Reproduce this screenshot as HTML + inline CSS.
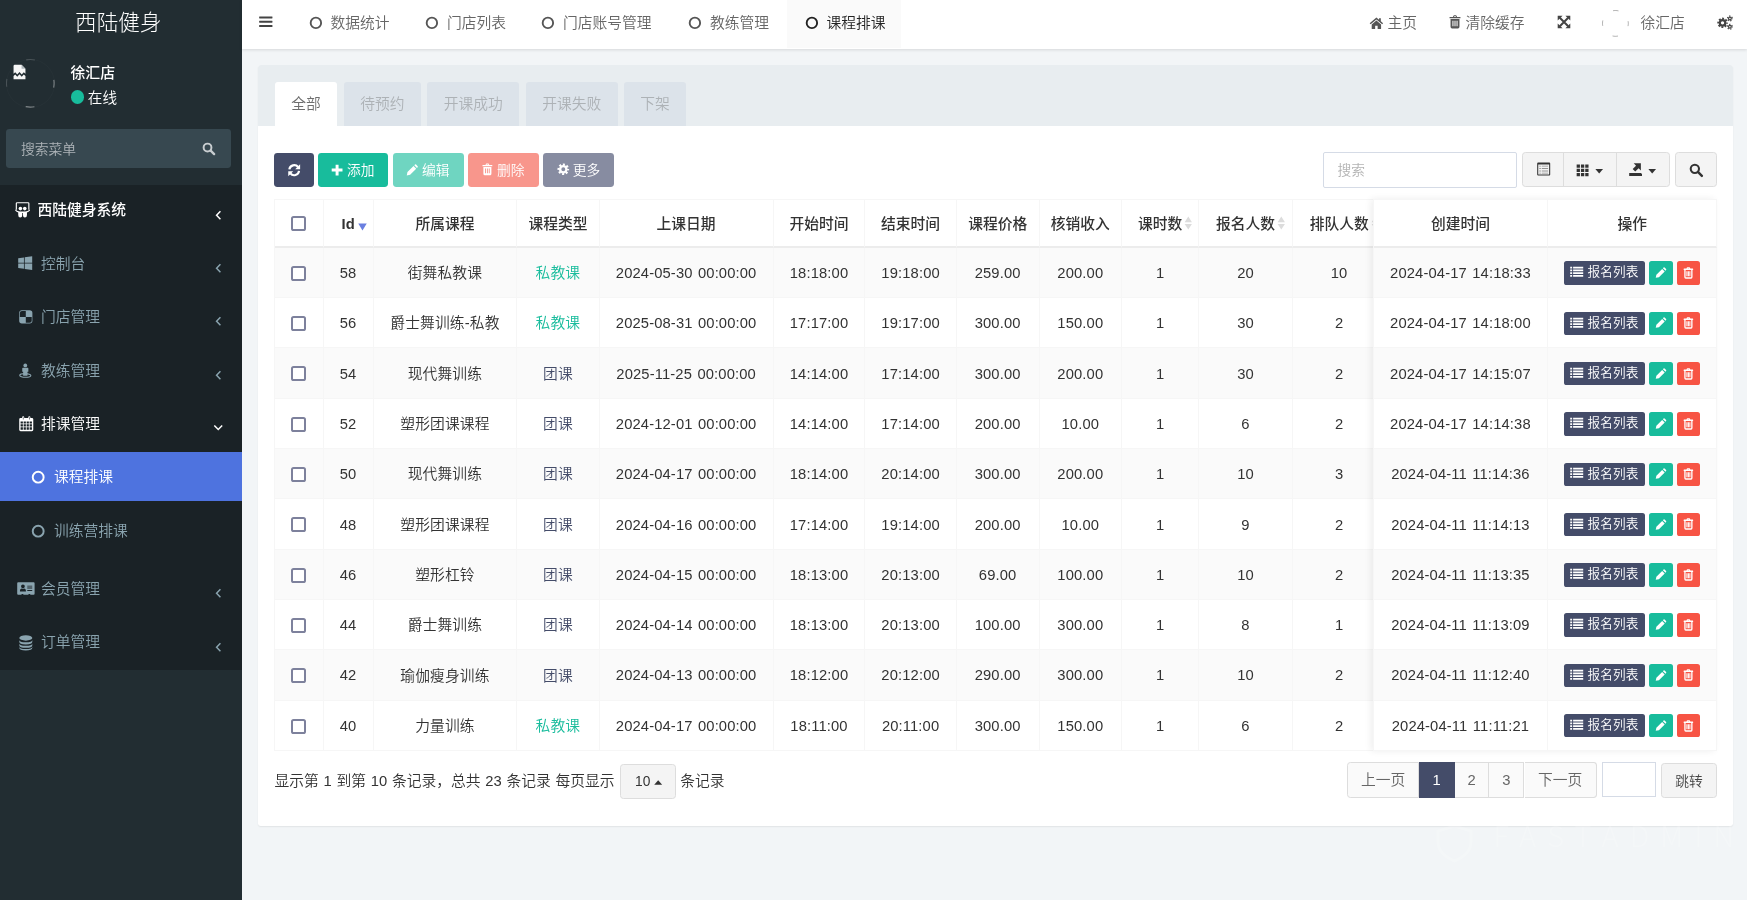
<!DOCTYPE html>
<html lang="zh-CN">
<head>
<meta charset="utf-8">
<title>西陆健身</title>
<style>
*{box-sizing:border-box;margin:0;padding:0}
html,body{width:1747px;height:900px;overflow:hidden}
body{font-family:"Liberation Sans","Noto Sans CJK SC",sans-serif;font-size:14.7px;font-weight:350;color:#333;background:#f2f5f7;position:relative;-webkit-font-smoothing:antialiased}
.sidebar,.hdr,.panel{will-change:transform}
svg{display:block;overflow:visible}
i{font-style:normal}
/* ---------- sidebar ---------- */
.sidebar{position:absolute;left:0;top:0;width:242px;height:900px;background:#222d32;color:#fff;overflow:hidden}
.logo{position:absolute;left:0;top:0;width:236.6px;height:48.6px;line-height:46.4px;text-align:center;font-size:21.6px;font-weight:300;color:#fff;letter-spacing:0}
.avatar{position:absolute;left:6.2px;top:59px;width:48.6px;height:48.6px;border-radius:50%;border:1px solid rgba(255,255,255,.02);overflow:visible}
.avatar .ring{position:absolute;left:-1px;top:-1px;width:48.6px;height:48.6px}
.avatar .brk{position:absolute;left:5.7px;top:4.2px;width:13px;height:16px}
.uname{position:absolute;left:70.4px;top:61.8px;height:22px;line-height:22px;font-size:14.9px;font-weight:500;color:#fff}
.ustat{position:absolute;left:70.6px;top:86.9px;height:22px;line-height:22px;font-size:14.6px;color:#fff;padding-left:17.2px}
.ustat .dot{position:absolute;left:0;top:3.6px;width:13.2px;height:13.2px;border-radius:50%;background:#18bc9c}
.sform{position:absolute;left:6.2px;top:129px;width:225px;height:39.2px;border-radius:3.4px;background:#374850;color:#aeb4b8;font-size:13.8px;line-height:42.6px;padding-left:14.8px}
.sform svg{position:absolute;left:196px;top:13.4px;width:13.6px;height:13.6px;color:#c8cdd0}
.menu{position:absolute;left:0;top:184.7px;width:242px;height:485.8px;background:#1a2226}
.mi{position:absolute;left:0;width:242px;height:53.4px;line-height:54.8px;font-size:14.75px;color:#8aa4af;white-space:nowrap}
.mi .ic{position:absolute;top:50%}
.mi .tx{position:absolute;left:41px;top:0}
.mi .ar{position:absolute;left:215px;top:26.3px;width:7px;height:10.5px}
.mi.on{color:#fff}
.mi.hd{color:#fff}
.mi.hd .tx{left:37.6px;font-weight:500}
.mi.sub .tx{left:54px}
.mi.sub .ic{left:31.4px;width:14.4px;height:14.4px;margin-top:-7px}
.mi.act{background:#4e73df;color:#fff;height:49.4px;line-height:51px}
/* ---------- header ---------- */
.hdr{position:absolute;left:242px;top:0;width:1505px;height:48.8px;background:#fff;box-shadow:0 1px 3px rgba(0,0,0,.12);color:#666;font-size:14.75px;white-space:nowrap}
.hdr .bars{position:absolute;left:17px;top:16.2px;width:13.6px;height:11.4px;color:#444}
.tab{position:absolute;top:0;height:48.4px;line-height:46px;padding-left:39.4px}
.tab svg{position:absolute;left:17.8px;top:15.6px;width:13.8px;height:13.8px;color:#555}
.tab.on{background:#fafafa;color:#222}
.tab.on svg{color:#222}
.rn{position:absolute;top:0;height:48.4px;line-height:46px}
.rn svg{position:absolute}
.uimg{position:absolute;left:1360.2px;top:10px;width:26.8px;height:26.8px}
/* ---------- panel ---------- */
.panel{position:absolute;left:258px;top:64.8px;width:1475.2px;height:760.8px;background:#fff;border-radius:3px;box-shadow:0 1px 1.5px rgba(0,0,0,.07)}
.phead{position:absolute;left:0;top:0;width:100%;height:61px;background:#e8edf0;border-radius:3px 3px 0 0}
.pt{position:absolute;top:17.4px;height:43.6px;line-height:45px;text-align:center;font-size:14.75px;color:#adb2b6;background:#dce3ea;border-radius:3px 3px 0 0}
.pt.on{background:#fff;color:#6e6e6e}
/* toolbar */
.btn{position:absolute;top:87.6px;height:34.6px;border-radius:3.4px;color:#fff;font-size:13.75px;line-height:35.4px;white-space:nowrap}
.btn svg{position:absolute}
.b-pri{background:#444c69}
.b-suc{background:#18bc9c}
.b-suc.dis{background:#6fd5c1}
.b-dan.dis{background:#f8968c}
.b-pri.dis{background:#878ca1}
.sinp{position:absolute;left:1065px;top:87.4px;width:194px;height:35.2px;border:1.2px solid #d5dbe6;border-radius:2px;color:#b3b3b3;font-size:13.75px;line-height:35.6px;padding-left:13.6px;background:#fff}
.bgrp{position:absolute;top:87.4px;height:34.6px;background:#f4f4f4;border:1.1px solid #ddd;border-radius:3.4px;color:#333}
.bgrp svg{position:absolute}
.bgrp .dv{position:absolute;top:0;width:1.1px;height:100%;background:#ddd}
/* tables */
.tmain{position:absolute;left:16.4px;top:134px;width:1442px;height:552px;overflow:hidden}
.tfix{position:absolute;left:1114.6px;top:134px;width:343.8px;height:552px;background:#fff;box-shadow:-2px 0 7px rgba(0,0,0,.07)}
.tb{border-collapse:separate;border-spacing:0;table-layout:fixed;width:auto;border-top:1.1px solid #f6f6f6;border-left:1.1px solid #f6f6f6}
.tmain .tb{width:1111.3px}
.tfix .tb{width:343.8px}
.tb th,.tb td{border-right:1.1px solid #f6f6f6;border-bottom:1.1px solid #f6f6f6;text-align:center;vertical-align:middle;white-space:nowrap;font-size:14.75px;color:#333;overflow:visible}
.tb th{height:47.9px;padding-top:0.7px;font-weight:500;border-bottom:2.1px solid #ececec;color:#333;font-size:14.75px}
.tb td{height:50.3px;padding-top:1px}
.tb tbody tr:nth-child(odd) td{background:#fafafa}
.tb tbody tr:nth-child(even) td{background:#fff}
.cb{display:inline-block;width:15px;height:15px;border:2px solid #7d819c;border-radius:2.6px;background:#fff;vertical-align:middle;position:relative;top:-0.5px}
.cj{display:inline-block;position:relative;top:-1.4px}
.tb th .cj{top:-0.3px}
.lb{font-weight:700;position:relative;top:1px}
.tb td{letter-spacing:.13px}
.tb td.dt{word-spacing:1.2px}
.tsuc{color:#18bc9c}
.tpri{color:#444c69}
.sh{position:relative;display:inline-block}
.sort{position:absolute;left:100%;top:50%}
.sort.both{margin-left:2px;margin-top:-7.4px;width:8.6px;height:14.2px;color:#dcdcdc}
.sort.desc{margin-left:3.2px;margin-top:0.2px;width:9px;height:7.8px;color:#6a7fe0}
.ops{font-size:0 !important;white-space:nowrap}
.xb{display:inline-block;position:relative;height:23.4px;line-height:22.6px;border-radius:2.6px;color:#fff;font-size:12.65px;vertical-align:middle;margin:0 2.2px}
.xb svg{position:absolute}
.xb-p{background:#444c69;width:80.8px;padding-left:23.2px;text-align:left}
.xb-s{background:#18bc9c;width:23.4px}
.xb-d{background:#f75444;width:23.2px}
.i-list{left:6px;top:4.9px;width:13.4px;height:11.4px}
.i-pen{left:6px;top:5.8px;width:11.6px;height:11.6px}
.i-tr{left:6.2px;top:5.6px;width:10.8px;height:11.8px}
/* pagination */
.pinfo{position:absolute;left:16.4px;top:698px;height:36px;line-height:37px;font-size:14.75px;color:#333;white-space:nowrap;word-spacing:.7px}
.psz{position:absolute;left:362.2px;top:699.4px;width:55.4px;height:34.6px;border:1.1px solid #ddd;border-radius:3.4px;background:#f4f4f4;font-size:13.75px;line-height:33px;padding-left:13.8px;color:#333}
.psz svg{position:absolute;left:33.2px;top:14.4px;width:8.4px;height:5px;color:#333}
.pg{position:absolute;top:697.2px;height:36px;line-height:35.6px;text-align:center;font-size:14.75px;color:#666;background:#fafafa;border:1.1px solid #ddd;border-left-width:0}
.pg.first{border-left-width:1.1px;border-radius:3.4px 0 0 3.4px}
.pg.last{border-radius:0 3.4px 3.4px 0}
.pg.on{background:#444c69;border-color:#444c69;color:#fff}
.pinp{position:absolute;left:1344.4px;top:697.2px;width:53.4px;height:34.8px;border:1.1px solid #d5dbe6;background:#fff}
.pgo{position:absolute;left:1403.2px;top:698.4px;width:55.4px;height:34.4px;border:1.1px solid #ddd;border-radius:3.4px;background:#f4f4f4;font-size:13.75px;line-height:36.4px;text-align:center;color:#444}
.wm{position:absolute;left:1493.5px;top:813.4px;font-family:"Noto Sans CJK SC",sans-serif;font-size:29px;line-height:42px;letter-spacing:11.2px;color:rgba(255,255,255,.2);font-weight:300;white-space:nowrap}
.wms{position:absolute;left:1434px;top:825px;width:41px;height:37px}

</style>
</head>
<body>

<div class="sidebar">
<div class="logo">西陆健身</div>
<div class="avatar"><svg class="ring" viewBox="0 0 48.6 48.6"><circle cx="24.3" cy="24.3" r="23.8" fill="none" stroke="rgba(255,255,255,.42)" stroke-width="1.1" stroke-dasharray="9 28.385 9 103.155" stroke-dashoffset="4.5"/><circle cx="24.3" cy="24.3" r="23.8" fill="none" stroke="rgba(255,255,255,.17)" stroke-width="1.1" stroke-dasharray="9 28.385 9 103.155" stroke-dashoffset="4.5" transform="rotate(180 24.3 24.3)"/></svg><svg class="brk" viewBox="0 0 14 16"><path d="M0.6 1.6 Q0.6 0.3 1.9 0.3 H9.2 L13.4 4.5 V9.8 L11.6 8.2 L9.4 10.6 L7 8 L4.6 10.6 L2.4 8.2 L0.6 9.8 Z" fill="#f6f6f6"/><path d="M9.2 0.3 V4.5 H13.4 Z" fill="#aeb6ba"/><path d="M0.6 12.4 L2.4 10.6 L4.6 13 L7 10.4 L9.4 13 L11.6 10.6 L13.4 12.4 V15.7 H0.6 Z" fill="#f6f6f6"/></svg></div>
<div class="uname">徐汇店</div>
<div class="ustat"><i class="dot"></i>在线</div>
<div class="sform">搜索菜单<svg viewBox="0 0 16 16"><circle cx="6.5" cy="6.5" r="4.6" fill="none" stroke="currentColor" stroke-width="2.3"/><path d="M10.2 10.2 L14.3 14.3" stroke="currentColor" stroke-width="2.7" stroke-linecap="round"/></svg></div>
<div class="menu">
<div class="mi hd" style="top:-1.4px"><svg class="ic" style="left:15px;width:15.2px;height:16.2px;margin-top:-7.6px" viewBox="0 0 16 17"><path d="M2.2 0.8 H13.8 Q14.6 0.8 14.6 1.6 V8.2" fill="none" stroke="currentColor" stroke-width="1.2"/><path d="M1.4 8.2 V1.6 Q1.4 0.8 2.2 0.8" fill="none" stroke="currentColor" stroke-width="1.2"/><circle cx="5.7" cy="6.9" r="1.9" fill="currentColor"/><circle cx="10.3" cy="6.9" r="1.9" fill="currentColor"/><path d="M0.4 8 Q3 10.2 5.6 10 H10.4 Q13 10.2 15.6 8 L15.8 8.8 Q14.4 10.4 12.6 11 V13.6 Q12.6 16.4 10.4 16.4 Q8.4 16.4 8.4 14 V11.6 H7.6 V14 Q7.6 16.4 5.6 16.4 Q3.4 16.4 3.4 13.6 V11 Q1.6 10.4 0.2 8.8 Z" fill="currentColor"/></svg><span class="tx">西陆健身系统</span><svg class="ar" viewBox="0 0 8 12"><path d="M6.2 1.5 L1.8 6 L6.2 10.5" fill="none" stroke="currentColor" stroke-width="1.7"/></svg></div>
<div class="mi" style="top:52px"><svg class="ic" style="left:18.4px;width:14.4px;height:14.4px;margin-top:-7px" viewBox="0 0 15 15"><path d="M0.2 2.3 L6.2 1.5 V7 H0.2 Z M7 1.4 L14.8 0.3 V7 H7 Z M0.2 7.8 H6.2 V13.4 L0.2 12.6 Z M7 7.8 H14.8 V14.6 L7 13.5 Z" fill="currentColor"/></svg><span class="tx">控制台</span><svg class="ar" viewBox="0 0 8 12"><path d="M6.2 1.5 L1.8 6 L6.2 10.5" fill="none" stroke="currentColor" stroke-width="1.7"/></svg></div>
<div class="mi" style="top:105.5px"><svg class="ic" style="left:18.8px;width:13.6px;height:13.8px;margin-top:-7px" viewBox="0 0 14 14"><path fill-rule="evenodd" d="M3 0.2 H11 Q13.8 0.2 13.8 3 V11 Q13.8 13.8 11 13.8 H3 Q0.2 13.8 0.2 11 V3 Q0.2 0.2 3 0.2 Z M3 0.9 Q0.9 0.9 0.9 3 V7 H7 V0.9 Z M7 7 V13.1 H11 Q13.1 13.1 13.1 11 V7 Z" fill="currentColor"/></svg><span class="tx">门店管理</span><svg class="ar" viewBox="0 0 8 12"><path d="M6.2 1.5 L1.8 6 L6.2 10.5" fill="none" stroke="currentColor" stroke-width="1.7"/></svg></div>
<div class="mi" style="top:159px"><svg class="ic" style="left:18.8px;width:12.6px;height:15.2px;margin-top:-7.8px" viewBox="0 0 14 16"><circle cx="7" cy="2.2" r="2.1" fill="currentColor"/><path d="M4.4 4.8 H9.6 Q10.4 4.8 10.4 5.6 V9.4 H9.4 V13.6 H4.6 V9.4 H3.6 V5.6 Q3.6 4.8 4.4 4.8 Z" fill="currentColor"/><ellipse cx="7" cy="13.4" rx="6.2" ry="2" fill="none" stroke="currentColor" stroke-width="1.2"/></svg><span class="tx">教练管理</span><svg class="ar" viewBox="0 0 8 12"><path d="M6.2 1.5 L1.8 6 L6.2 10.5" fill="none" stroke="currentColor" stroke-width="1.7"/></svg></div>
<div class="mi on" style="top:212.4px"><svg class="ic" style="left:18.8px;width:14.5px;height:15.4px;margin-top:-7.4px" viewBox="0 0 15 16"><path fill-rule="evenodd" d="M1.6 2 H3.2 V1.4 Q3.2 0.2 4.3 0.2 Q5.4 0.2 5.4 1.4 V2 H9.6 V1.4 Q9.6 0.2 10.7 0.2 Q11.8 0.2 11.8 1.4 V2 H13.4 Q14.8 2 14.8 3.4 V14.4 Q14.8 15.8 13.4 15.8 H1.6 Q0.2 15.8 0.2 14.4 V3.4 Q0.2 2 1.6 2 Z M4 1.3 V3.6 H4.6 V1.3 Z M10.4 1.3 V3.6 H11 V1.3 Z M1.6 5.8 V7.9 H4 V5.8 Z M4.8 5.8 V7.9 H7.1 V5.8 Z M7.9 5.8 V7.9 H10.2 V5.8 Z M11 5.8 V7.9 H13.4 V5.8 Z M1.6 8.7 V11 H4 V8.7 Z M4.8 8.7 V11 H7.1 V8.7 Z M7.9 8.7 V11 H10.2 V8.7 Z M11 8.7 V11 H13.4 V8.7 Z M1.6 11.8 V14.2 H4 V11.8 Z M4.8 11.8 V14.2 H7.1 V11.8 Z M7.9 11.8 V14.2 H10.2 V11.8 Z M11 11.8 V14.2 H13.4 V11.8 Z" fill="currentColor"/></svg><span class="tx">排课管理</span><svg class="ar" style="left:213px;top:27.2px;width:10.5px;height:7px" viewBox="0 0 12 8"><path d="M1.5 1.8 L6 6.2 L10.5 1.8" fill="none" stroke="currentColor" stroke-width="1.7"/></svg></div>
<div class="mi sub act" style="top:267.4px"><svg class="ic" viewBox="0 0 14 14"><circle cx="7" cy="7" r="5.3" fill="none" stroke="currentColor" stroke-width="1.9"/></svg><span class="tx">课程排课</span></div>
<div class="mi sub" style="top:319.6px"><svg class="ic" viewBox="0 0 14 14"><circle cx="7" cy="7" r="5.3" fill="none" stroke="currentColor" stroke-width="1.9"/></svg><span class="tx">训练营排课</span></div>
<div class="mi" style="top:377.2px"><svg class="ic" style="left:16.8px;width:17.8px;height:13px;margin-top:-6.6px" viewBox="0 0 18 13"><path fill-rule="evenodd" d="M1.2 0.2 H16.8 Q17.8 0.2 17.8 1.2 V11.8 Q17.8 12.8 16.8 12.8 H13.4 V12 H11.6 V12.8 H6.4 V12 H4.6 V12.8 H1.2 Q0.2 12.8 0.2 11.8 V1.2 Q0.2 0.2 1.2 0.2 Z M6 2.4 A1.9 1.9 0 1 0 6 6.2 A1.9 1.9 0 1 0 6 2.4 Z M3 9.6 H9 V8.6 Q9 6.6 7.4 6.4 Q6 7.2 4.6 6.4 Q3 6.6 3 8.6 Z M10.4 3.6 V4.6 H15.4 V3.6 Z M10.4 5.6 V6.6 H15.4 V5.6 Z M10.4 8 V9 H15.4 V8 Z" fill="currentColor"/></svg><span class="tx">会员管理</span><svg class="ar" viewBox="0 0 8 12"><path d="M6.2 1.5 L1.8 6 L6.2 10.5" fill="none" stroke="currentColor" stroke-width="1.7"/></svg></div>
<div class="mi" style="top:430.8px"><svg class="ic" style="left:18.8px;width:13.6px;height:15.6px;margin-top:-7.6px" viewBox="0 0 14 16"><ellipse cx="7" cy="3" rx="6.7" ry="2.8" fill="currentColor"/><path d="M0.3 5 Q0.3 7.4 7 7.4 Q13.7 7.4 13.7 5 V7 Q13.7 9.8 7 9.8 Q0.3 9.8 0.3 7 Z" fill="currentColor"/><path d="M0.3 8.6 Q0.3 11 7 11 Q13.7 11 13.7 8.6 V10.4 Q13.7 13.2 7 13.2 Q0.3 13.2 0.3 10.4 Z" fill="currentColor"/><path d="M0.3 12 Q0.3 14.4 7 14.4 Q13.7 14.4 13.7 12 V13.2 Q13.7 15.9 7 15.9 Q0.3 15.9 0.3 13.2 Z" fill="currentColor"/></svg><span class="tx">订单管理</span><svg class="ar" viewBox="0 0 8 12"><path d="M6.2 1.5 L1.8 6 L6.2 10.5" fill="none" stroke="currentColor" stroke-width="1.7"/></svg></div>
</div>
</div>

<div class="hdr">
<svg class="bars" viewBox="0 0 14 12"><rect x="0" y="0.4" width="14" height="2.2" rx=".4" fill="currentColor"/><rect x="0" y="4.9" width="14" height="2.2" rx=".4" fill="currentColor"/><rect x="0" y="9.4" width="14" height="2.2" rx=".4" fill="currentColor"/></svg>
<div class="tab" style="left:49px;width:116.6px"><svg viewBox="0 0 14 14"><circle cx="7" cy="7" r="5.3" fill="none" stroke="currentColor" stroke-width="1.9"/></svg>数据统计</div>
<div class="tab" style="left:165.6px;width:116px"><svg viewBox="0 0 14 14"><circle cx="7" cy="7" r="5.3" fill="none" stroke="currentColor" stroke-width="1.9"/></svg>门店列表</div>
<div class="tab" style="left:281.6px;width:147px"><svg viewBox="0 0 14 14"><circle cx="7" cy="7" r="5.3" fill="none" stroke="currentColor" stroke-width="1.9"/></svg>门店账号管理</div>
<div class="tab" style="left:428.6px;width:116.4px"><svg viewBox="0 0 14 14"><circle cx="7" cy="7" r="5.3" fill="none" stroke="currentColor" stroke-width="1.9"/></svg>教练管理</div>
<div class="tab on" style="left:545px;width:114px"><svg viewBox="0 0 14 14"><circle cx="7" cy="7" r="5.3" fill="none" stroke="currentColor" stroke-width="1.9"/></svg>课程排课</div>
<div class="rn" style="left:1145.6px"><svg style="left:-18.8px;top:16.6px;width:14.8px;height:12.4px;color:#555" viewBox="0 0 16 14"><path d="M8 0.6 L0.4 7 L1.5 8.2 L8 2.8 L14.5 8.2 L15.6 7 L13 4.8 V1.4 H11 V3.1 Z M8 4 L2.7 8.4 V13.2 Q2.7 13.6 3.1 13.6 H6.6 V9.8 H9.4 V13.6 H12.9 Q13.3 13.6 13.3 13.2 V8.4 Z" fill="currentColor"/></svg>主页</div>
<div class="rn" style="left:1223.6px"><svg style="left:-16.6px;top:15.2px;width:12px;height:13.8px;color:#555" viewBox="0 0 14 16"><path fill-rule="evenodd" d="M4.6 2.2 L5.2 0.7 Q5.4 0.3 5.9 0.3 H8.1 Q8.6 0.3 8.8 0.7 L9.4 2.2 H13 Q13.4 2.2 13.4 2.6 V3.4 Q13.4 3.8 13 3.8 H1 Q0.6 3.8 0.6 3.4 V2.6 Q0.6 2.2 1 2.2 Z M5.8 2.2 H8.2 L7.9 1.4 H6.1 Z M1.8 4.6 H12.2 V13.6 Q12.2 15.6 10.4 15.6 H3.6 Q1.8 15.6 1.8 13.6 Z M4 6.6 V13 H5.2 V6.6 Z M6.4 6.6 V13 H7.6 V6.6 Z M8.8 6.6 V13 H10 V6.6 Z" fill="currentColor"/></svg>清除缓存</div>
<div class="rn" style="left:1315px"><svg style="left:0;top:15.4px;width:14px;height:14px;color:#444" viewBox="0 0 16 16"><path d="M3.2 3.2 L12.8 12.8 M12.8 3.2 L3.2 12.8" stroke="currentColor" stroke-width="2.3"/><path d="M0.8 0.8 H6.4 L0.8 6.4 Z M15.2 0.8 V6.4 L9.6 0.8 Z M0.8 15.2 V9.6 L6.4 15.2 Z M15.2 15.2 H9.6 L15.2 9.6 Z" fill="currentColor"/></svg></div>
<svg class="uimg" viewBox="0 0 26.8 26.8"><circle cx="13.4" cy="13.4" r="12.9" fill="none" stroke="rgba(0,0,0,.3)" stroke-width="1" stroke-dasharray="5.6 14.66" stroke-dashoffset="2.8"/></svg>
<div class="rn" style="left:1398.4px">徐汇店</div>
<div class="rn" style="left:1475px"><svg style="left:0;top:14.8px;width:16.6px;height:15px;color:#444" viewBox="0 0 18 16"><circle cx="6" cy="8.4" r="3" fill="none" stroke="currentColor" stroke-width="2.4"/><circle cx="6" cy="8.4" r="4.7" fill="none" stroke="currentColor" stroke-width="2" stroke-dasharray="2 1.69" stroke-dashoffset="1"/><circle cx="14" cy="3.6" r="1.5" fill="none" stroke="currentColor" stroke-width="1.3"/><circle cx="14" cy="3.6" r="2.6" fill="none" stroke="currentColor" stroke-width="1.3" stroke-dasharray="1.3 1.42" stroke-dashoffset=".65"/><circle cx="14" cy="12.6" r="1.5" fill="none" stroke="currentColor" stroke-width="1.3"/><circle cx="14" cy="12.6" r="2.6" fill="none" stroke="currentColor" stroke-width="1.3" stroke-dasharray="1.3 1.42" stroke-dashoffset=".65"/></svg></div>
</div>

<div class="panel">
<div class="phead">
<div class="pt on" style="left:17px;width:62px">全部</div>
<div class="pt" style="left:86px;width:76.6px">待预约</div>
<div class="pt" style="left:169.2px;width:92px">开课成功</div>
<div class="pt" style="left:267.6px;width:92.2px">开课失败</div>
<div class="pt" style="left:366px;width:61.8px">下架</div>
</div>
<div class="btn b-pri" style="left:16.2px;width:39.4px"><svg style="left:12.6px;top:10.2px;width:14.4px;height:14.4px" viewBox="0 0 16 16"><path d="M2.6 7.2 A5.5 5.5 0 0 1 12.3 4.4" fill="none" stroke="currentColor" stroke-width="2.4"/><path d="M14.6 1.4 V6.9 H9.1 Z" fill="currentColor"/><path d="M13.4 8.8 A5.5 5.5 0 0 1 3.7 11.6" fill="none" stroke="currentColor" stroke-width="2.4"/><path d="M1.4 14.6 V9.1 H6.9 Z" fill="currentColor"/></svg></div>
<div class="btn b-suc" style="left:60px;width:70.4px;padding-left:29px"><svg style="left:13.4px;top:11.2px;width:12.2px;height:12.2px" viewBox="0 0 14 14"><path d="M5.3 0.8 h3.4 v4.5 h4.5 v3.4 h-4.5 v4.5 h-3.4 v-4.5 h-4.5 v-3.4 h4.5z" fill="currentColor"/></svg>添加</div>
<div class="btn b-suc dis" style="left:135.1px;width:70.7px;padding-left:29px"><svg style="left:13.4px;top:11px;width:12.2px;height:12.2px" viewBox="0 0 16 16"><path d="M1 15 L1.9 10.6 L9.9 2.6 L13.4 6.1 L5.4 14.1 Z M10.9 1.6 L11.8 0.7 Q12.5 0.1 13.2 0.7 L15.3 2.8 Q15.9 3.5 15.3 4.2 L14.4 5.1 Z" fill="currentColor"/></svg>编辑</div>
<div class="btn b-dan dis" style="left:210.4px;width:70.5px;padding-left:28.6px"><svg style="left:14px;top:10.6px;width:10.8px;height:13px" viewBox="0 0 14 16"><path fill-rule="evenodd" d="M4.6 2.2 L5.2 0.7 Q5.4 0.3 5.9 0.3 H8.1 Q8.6 0.3 8.8 0.7 L9.4 2.2 H13 Q13.4 2.2 13.4 2.6 V3.4 Q13.4 3.8 13 3.8 H1 Q0.6 3.8 0.6 3.4 V2.6 Q0.6 2.2 1 2.2 Z M5.8 2.2 H8.2 L7.9 1.4 H6.1 Z M1.8 4.6 H12.2 V13.6 Q12.2 15.6 10.4 15.6 H3.6 Q1.8 15.6 1.8 13.6 Z M4 6.6 V13 H5.2 V6.6 Z M6.4 6.6 V13 H7.6 V6.6 Z M8.8 6.6 V13 H10 V6.6 Z" fill="currentColor"/></svg>删除</div>
<div class="btn b-pri dis" style="left:284.8px;width:71.3px;padding-left:30px"><svg style="left:14px;top:10.8px;width:12.6px;height:12.6px" viewBox="0 0 16 16"><circle cx="8" cy="8" r="4" fill="none" stroke="currentColor" stroke-width="3"/><circle cx="8" cy="8" r="6.1" fill="none" stroke="currentColor" stroke-width="2.6" stroke-dasharray="2.6 2.19" stroke-dashoffset="1.3"/></svg>更多</div>
<div class="sinp">搜索</div>
<div class="bgrp" style="left:1264.4px;width:148px"><svg style="left:14px;top:8.6px;width:13.4px;height:14px" viewBox="0 0 14 14"><path fill-rule="evenodd" d="M1.2 0.2 H12.8 Q13.8 0.2 13.8 1.2 V12.8 Q13.8 13.8 12.8 13.8 H1.2 Q0.2 13.8 0.2 12.8 V1.2 Q0.2 0.2 1.2 0.2 Z M1.3 2.2 V12.7 H12.7 V2.2 Z" fill="currentColor"/><path d="M2.4 3.5 H4 V4.5 H2.4 Z M5 3.5 H11.6 V4.5 H5 Z M2.4 6 H4 V7 H2.4 Z M5 6 H11.6 V7 H5 Z M2.4 8.5 H4 V9.5 H2.4 Z M5 8.5 H11.6 V9.5 H5 Z M2.4 10.9 H4 V11.8 H2.4 Z M5 10.9 H11.6 V11.8 H5 Z" fill="currentColor" opacity=".5"/></svg><i class="dv" style="left:40px"></i><svg style="left:52.8px;top:10.2px;width:13.2px;height:12.8px" viewBox="0 0 14 14"><path d="M0.5 0.5h3.6v3.6h-3.6z M5.2 0.5h3.6v3.6h-3.6z M9.9 0.5h3.6v3.6h-3.6z M0.5 5.2h3.6v3.6h-3.6z M5.2 5.2h3.6v3.6h-3.6z M9.9 5.2h3.6v3.6h-3.6z M0.5 9.9h3.6v3.6h-3.6z M5.2 9.9h3.6v3.6h-3.6z M9.9 9.9h3.6v3.6h-3.6z" fill="currentColor"/></svg><svg style="left:71.4px;top:15.6px;width:8.4px;height:4.8px" viewBox="0 0 8 5"><path d="M0 0 H8 L4 4.6 Z" fill="currentColor"/></svg><i class="dv" style="left:93px"></i><svg style="left:105.8px;top:9.9px;width:13.2px;height:13.4px" viewBox="0 0 14 14"><path d="M5 0.2 H12.6 V7.8 L10.2 5.4 L6.6 9 L3.9 6.3 L7.5 2.7 Z" fill="currentColor"/><path d="M0.2 10.6 H12.6 L13.8 11.6 V13.8 H0.2 Z" fill="currentColor"/></svg><svg style="left:124.4px;top:15.6px;width:8.4px;height:4.8px" viewBox="0 0 8 5"><path d="M0 0 H8 L4 4.6 Z" fill="currentColor"/></svg></div>
<div class="bgrp" style="left:1417.4px;width:41.2px"><svg style="left:12.2px;top:9.4px;width:14.4px;height:14.4px" viewBox="0 0 16 16"><circle cx="6.5" cy="6.5" r="4.6" fill="none" stroke="currentColor" stroke-width="2.3"/><path d="M10.2 10.2 L14.3 14.3" stroke="currentColor" stroke-width="2.7" stroke-linecap="round"/></svg></div>

<div class="tmain"><table class="tb">
<colgroup><col style="width:48.2px"><col style="width:50.1px"><col style="width:143.5px"><col style="width:82.5px"><col style="width:173.9px"><col style="width:91.9px"><col style="width:91.3px"><col style="width:82.8px"><col style="width:82.5px"><col style="width:77.4px"><col style="width:93.2px"><col style="width:94.0px"></colgroup>
<thead><tr><th><span class="cb"></span></th><th><span class="sh"><span class="lb">Id</span><svg class="sort desc" viewBox="0 0 8 7"><path d="M0.2 0.4 H7.8 L4 6.8 Z" fill="currentColor"/></svg></span></th><th><span class="cj">所属课程</span></th><th><span class="cj">课程类型</span></th><th><span class="cj">上课日期</span></th><th><span class="cj">开始时间</span></th><th><span class="cj">结束时间</span></th><th><span class="cj">课程价格</span></th><th><span class="cj">核销收入</span></th><th><span class="sh"><span class="cj">课时数</span><svg class="sort both" viewBox="0 0 8 14"><path d="M4 0.6 L7.6 6.2 H0.4 Z M4 13.4 L7.6 7.8 H0.4 Z" fill="currentColor"/></svg></span></th><th><span class="sh"><span class="cj">报名人数</span><svg class="sort both" viewBox="0 0 8 14"><path d="M4 0.6 L7.6 6.2 H0.4 Z M4 13.4 L7.6 7.8 H0.4 Z" fill="currentColor"/></svg></span></th><th><span class="sh"><span class="cj">排队人数</span><svg class="sort both" viewBox="0 0 8 14"><path d="M4 0.6 L7.6 6.2 H0.4 Z M4 13.4 L7.6 7.8 H0.4 Z" fill="currentColor"/></svg></span></th></tr></thead>
<tbody>
<tr><td><span class="cb"></span></td><td>58</td><td><span class="cj">街舞私教课</span></td><td><span class="cj tsuc">私教课</span></td><td class="dt">2024-05-30 00:00:00</td><td>18:18:00</td><td>19:18:00</td><td>259.00</td><td>200.00</td><td>1</td><td>20</td><td>10</td></tr>
<tr><td><span class="cb"></span></td><td>56</td><td><span class="cj">爵士舞训练-私教</span></td><td><span class="cj tsuc">私教课</span></td><td class="dt">2025-08-31 00:00:00</td><td>17:17:00</td><td>19:17:00</td><td>300.00</td><td>150.00</td><td>1</td><td>30</td><td>2</td></tr>
<tr><td><span class="cb"></span></td><td>54</td><td><span class="cj">现代舞训练</span></td><td><span class="cj tpri">团课</span></td><td class="dt">2025-11-25 00:00:00</td><td>14:14:00</td><td>17:14:00</td><td>300.00</td><td>200.00</td><td>1</td><td>30</td><td>2</td></tr>
<tr><td><span class="cb"></span></td><td>52</td><td><span class="cj">塑形团课课程</span></td><td><span class="cj tpri">团课</span></td><td class="dt">2024-12-01 00:00:00</td><td>14:14:00</td><td>17:14:00</td><td>200.00</td><td>10.00</td><td>1</td><td>6</td><td>2</td></tr>
<tr><td><span class="cb"></span></td><td>50</td><td><span class="cj">现代舞训练</span></td><td><span class="cj tpri">团课</span></td><td class="dt">2024-04-17 00:00:00</td><td>18:14:00</td><td>20:14:00</td><td>300.00</td><td>200.00</td><td>1</td><td>10</td><td>3</td></tr>
<tr><td><span class="cb"></span></td><td>48</td><td><span class="cj">塑形团课课程</span></td><td><span class="cj tpri">团课</span></td><td class="dt">2024-04-16 00:00:00</td><td>17:14:00</td><td>19:14:00</td><td>200.00</td><td>10.00</td><td>1</td><td>9</td><td>2</td></tr>
<tr><td><span class="cb"></span></td><td>46</td><td><span class="cj">塑形杠铃</span></td><td><span class="cj tpri">团课</span></td><td class="dt">2024-04-15 00:00:00</td><td>18:13:00</td><td>20:13:00</td><td>69.00</td><td>100.00</td><td>1</td><td>10</td><td>2</td></tr>
<tr><td><span class="cb"></span></td><td>44</td><td><span class="cj">爵士舞训练</span></td><td><span class="cj tpri">团课</span></td><td class="dt">2024-04-14 00:00:00</td><td>18:13:00</td><td>20:13:00</td><td>100.00</td><td>300.00</td><td>1</td><td>8</td><td>1</td></tr>
<tr><td><span class="cb"></span></td><td>42</td><td><span class="cj">瑜伽瘦身训练</span></td><td><span class="cj tpri">团课</span></td><td class="dt">2024-04-13 00:00:00</td><td>18:12:00</td><td>20:12:00</td><td>290.00</td><td>300.00</td><td>1</td><td>10</td><td>2</td></tr>
<tr><td><span class="cb"></span></td><td>40</td><td><span class="cj">力量训练</span></td><td><span class="cj tsuc">私教课</span></td><td class="dt">2024-04-17 00:00:00</td><td>18:11:00</td><td>20:11:00</td><td>300.00</td><td>150.00</td><td>1</td><td>6</td><td>2</td></tr>
</tbody></table></div>
<div class="tfix"><table class="tb">
<colgroup><col style="width:174.7px"><col style="width:169.1px"></colgroup>
<thead><tr><th><span class="cj">创建时间</span></th><th><span class="cj">操作</span></th></tr></thead>
<tbody>
<tr><td class="dt">2024-04-17 14:18:33</td><td class="ops"><span class="xb xb-p"><svg class="i-list" viewBox="0 0 16 14"><path d="M0 0.8h2.4v2.2h-2.4z M3.6 0.8h12.4v2.2h-12.4z M0 4.2h2.4v2.2h-2.4z M3.6 4.2h12.4v2.2h-12.4z M0 7.6h2.4v2.2h-2.4z M3.6 7.6h12.4v2.2h-12.4z M0 11h2.4v2.2h-2.4z M3.6 11h12.4v2.2h-12.4z" fill="currentColor"/></svg>报名列表</span><span class="xb xb-s"><svg class="i-pen" viewBox="0 0 16 16"><path d="M1 15 L1.9 10.6 L9.9 2.6 L13.4 6.1 L5.4 14.1 Z M10.9 1.6 L11.8 0.7 Q12.5 0.1 13.2 0.7 L15.3 2.8 Q15.9 3.5 15.3 4.2 L14.4 5.1 Z" fill="currentColor"/></svg></span><span class="xb xb-d"><svg class="i-tr" viewBox="0 0 14 16"><path fill-rule="evenodd" d="M4.4 2.2 L5 0.7 Q5.2 0.2 5.8 0.2 H8.2 Q8.8 0.2 9 0.7 L9.6 2.2 H13 Q13.5 2.2 13.5 2.7 V3.4 Q13.5 3.9 13 3.9 H12.6 V13.4 Q12.6 15.8 10.6 15.8 H3.4 Q1.4 15.8 1.4 13.4 V3.9 H1 Q0.5 3.9 0.5 3.4 V2.7 Q0.5 2.2 1 2.2 Z M6 2.2 H8 L7.7 1.6 H6.3 Z M3.2 3.9 V13.4 Q3.2 14 3.7 14 H10.3 Q10.8 14 10.8 13.4 V3.9 Z M4.3 5.6 H5.7 V12.4 H4.3 Z M6.3 5.6 H7.7 V12.4 H6.3 Z M8.3 5.6 H9.7 V12.4 H8.3 Z" fill="currentColor"/></svg></span></td></tr>
<tr><td class="dt">2024-04-17 14:18:00</td><td class="ops"><span class="xb xb-p"><svg class="i-list" viewBox="0 0 16 14"><path d="M0 0.8h2.4v2.2h-2.4z M3.6 0.8h12.4v2.2h-12.4z M0 4.2h2.4v2.2h-2.4z M3.6 4.2h12.4v2.2h-12.4z M0 7.6h2.4v2.2h-2.4z M3.6 7.6h12.4v2.2h-12.4z M0 11h2.4v2.2h-2.4z M3.6 11h12.4v2.2h-12.4z" fill="currentColor"/></svg>报名列表</span><span class="xb xb-s"><svg class="i-pen" viewBox="0 0 16 16"><path d="M1 15 L1.9 10.6 L9.9 2.6 L13.4 6.1 L5.4 14.1 Z M10.9 1.6 L11.8 0.7 Q12.5 0.1 13.2 0.7 L15.3 2.8 Q15.9 3.5 15.3 4.2 L14.4 5.1 Z" fill="currentColor"/></svg></span><span class="xb xb-d"><svg class="i-tr" viewBox="0 0 14 16"><path fill-rule="evenodd" d="M4.4 2.2 L5 0.7 Q5.2 0.2 5.8 0.2 H8.2 Q8.8 0.2 9 0.7 L9.6 2.2 H13 Q13.5 2.2 13.5 2.7 V3.4 Q13.5 3.9 13 3.9 H12.6 V13.4 Q12.6 15.8 10.6 15.8 H3.4 Q1.4 15.8 1.4 13.4 V3.9 H1 Q0.5 3.9 0.5 3.4 V2.7 Q0.5 2.2 1 2.2 Z M6 2.2 H8 L7.7 1.6 H6.3 Z M3.2 3.9 V13.4 Q3.2 14 3.7 14 H10.3 Q10.8 14 10.8 13.4 V3.9 Z M4.3 5.6 H5.7 V12.4 H4.3 Z M6.3 5.6 H7.7 V12.4 H6.3 Z M8.3 5.6 H9.7 V12.4 H8.3 Z" fill="currentColor"/></svg></span></td></tr>
<tr><td class="dt">2024-04-17 14:15:07</td><td class="ops"><span class="xb xb-p"><svg class="i-list" viewBox="0 0 16 14"><path d="M0 0.8h2.4v2.2h-2.4z M3.6 0.8h12.4v2.2h-12.4z M0 4.2h2.4v2.2h-2.4z M3.6 4.2h12.4v2.2h-12.4z M0 7.6h2.4v2.2h-2.4z M3.6 7.6h12.4v2.2h-12.4z M0 11h2.4v2.2h-2.4z M3.6 11h12.4v2.2h-12.4z" fill="currentColor"/></svg>报名列表</span><span class="xb xb-s"><svg class="i-pen" viewBox="0 0 16 16"><path d="M1 15 L1.9 10.6 L9.9 2.6 L13.4 6.1 L5.4 14.1 Z M10.9 1.6 L11.8 0.7 Q12.5 0.1 13.2 0.7 L15.3 2.8 Q15.9 3.5 15.3 4.2 L14.4 5.1 Z" fill="currentColor"/></svg></span><span class="xb xb-d"><svg class="i-tr" viewBox="0 0 14 16"><path fill-rule="evenodd" d="M4.4 2.2 L5 0.7 Q5.2 0.2 5.8 0.2 H8.2 Q8.8 0.2 9 0.7 L9.6 2.2 H13 Q13.5 2.2 13.5 2.7 V3.4 Q13.5 3.9 13 3.9 H12.6 V13.4 Q12.6 15.8 10.6 15.8 H3.4 Q1.4 15.8 1.4 13.4 V3.9 H1 Q0.5 3.9 0.5 3.4 V2.7 Q0.5 2.2 1 2.2 Z M6 2.2 H8 L7.7 1.6 H6.3 Z M3.2 3.9 V13.4 Q3.2 14 3.7 14 H10.3 Q10.8 14 10.8 13.4 V3.9 Z M4.3 5.6 H5.7 V12.4 H4.3 Z M6.3 5.6 H7.7 V12.4 H6.3 Z M8.3 5.6 H9.7 V12.4 H8.3 Z" fill="currentColor"/></svg></span></td></tr>
<tr><td class="dt">2024-04-17 14:14:38</td><td class="ops"><span class="xb xb-p"><svg class="i-list" viewBox="0 0 16 14"><path d="M0 0.8h2.4v2.2h-2.4z M3.6 0.8h12.4v2.2h-12.4z M0 4.2h2.4v2.2h-2.4z M3.6 4.2h12.4v2.2h-12.4z M0 7.6h2.4v2.2h-2.4z M3.6 7.6h12.4v2.2h-12.4z M0 11h2.4v2.2h-2.4z M3.6 11h12.4v2.2h-12.4z" fill="currentColor"/></svg>报名列表</span><span class="xb xb-s"><svg class="i-pen" viewBox="0 0 16 16"><path d="M1 15 L1.9 10.6 L9.9 2.6 L13.4 6.1 L5.4 14.1 Z M10.9 1.6 L11.8 0.7 Q12.5 0.1 13.2 0.7 L15.3 2.8 Q15.9 3.5 15.3 4.2 L14.4 5.1 Z" fill="currentColor"/></svg></span><span class="xb xb-d"><svg class="i-tr" viewBox="0 0 14 16"><path fill-rule="evenodd" d="M4.4 2.2 L5 0.7 Q5.2 0.2 5.8 0.2 H8.2 Q8.8 0.2 9 0.7 L9.6 2.2 H13 Q13.5 2.2 13.5 2.7 V3.4 Q13.5 3.9 13 3.9 H12.6 V13.4 Q12.6 15.8 10.6 15.8 H3.4 Q1.4 15.8 1.4 13.4 V3.9 H1 Q0.5 3.9 0.5 3.4 V2.7 Q0.5 2.2 1 2.2 Z M6 2.2 H8 L7.7 1.6 H6.3 Z M3.2 3.9 V13.4 Q3.2 14 3.7 14 H10.3 Q10.8 14 10.8 13.4 V3.9 Z M4.3 5.6 H5.7 V12.4 H4.3 Z M6.3 5.6 H7.7 V12.4 H6.3 Z M8.3 5.6 H9.7 V12.4 H8.3 Z" fill="currentColor"/></svg></span></td></tr>
<tr><td class="dt">2024-04-11 11:14:36</td><td class="ops"><span class="xb xb-p"><svg class="i-list" viewBox="0 0 16 14"><path d="M0 0.8h2.4v2.2h-2.4z M3.6 0.8h12.4v2.2h-12.4z M0 4.2h2.4v2.2h-2.4z M3.6 4.2h12.4v2.2h-12.4z M0 7.6h2.4v2.2h-2.4z M3.6 7.6h12.4v2.2h-12.4z M0 11h2.4v2.2h-2.4z M3.6 11h12.4v2.2h-12.4z" fill="currentColor"/></svg>报名列表</span><span class="xb xb-s"><svg class="i-pen" viewBox="0 0 16 16"><path d="M1 15 L1.9 10.6 L9.9 2.6 L13.4 6.1 L5.4 14.1 Z M10.9 1.6 L11.8 0.7 Q12.5 0.1 13.2 0.7 L15.3 2.8 Q15.9 3.5 15.3 4.2 L14.4 5.1 Z" fill="currentColor"/></svg></span><span class="xb xb-d"><svg class="i-tr" viewBox="0 0 14 16"><path fill-rule="evenodd" d="M4.4 2.2 L5 0.7 Q5.2 0.2 5.8 0.2 H8.2 Q8.8 0.2 9 0.7 L9.6 2.2 H13 Q13.5 2.2 13.5 2.7 V3.4 Q13.5 3.9 13 3.9 H12.6 V13.4 Q12.6 15.8 10.6 15.8 H3.4 Q1.4 15.8 1.4 13.4 V3.9 H1 Q0.5 3.9 0.5 3.4 V2.7 Q0.5 2.2 1 2.2 Z M6 2.2 H8 L7.7 1.6 H6.3 Z M3.2 3.9 V13.4 Q3.2 14 3.7 14 H10.3 Q10.8 14 10.8 13.4 V3.9 Z M4.3 5.6 H5.7 V12.4 H4.3 Z M6.3 5.6 H7.7 V12.4 H6.3 Z M8.3 5.6 H9.7 V12.4 H8.3 Z" fill="currentColor"/></svg></span></td></tr>
<tr><td class="dt">2024-04-11 11:14:13</td><td class="ops"><span class="xb xb-p"><svg class="i-list" viewBox="0 0 16 14"><path d="M0 0.8h2.4v2.2h-2.4z M3.6 0.8h12.4v2.2h-12.4z M0 4.2h2.4v2.2h-2.4z M3.6 4.2h12.4v2.2h-12.4z M0 7.6h2.4v2.2h-2.4z M3.6 7.6h12.4v2.2h-12.4z M0 11h2.4v2.2h-2.4z M3.6 11h12.4v2.2h-12.4z" fill="currentColor"/></svg>报名列表</span><span class="xb xb-s"><svg class="i-pen" viewBox="0 0 16 16"><path d="M1 15 L1.9 10.6 L9.9 2.6 L13.4 6.1 L5.4 14.1 Z M10.9 1.6 L11.8 0.7 Q12.5 0.1 13.2 0.7 L15.3 2.8 Q15.9 3.5 15.3 4.2 L14.4 5.1 Z" fill="currentColor"/></svg></span><span class="xb xb-d"><svg class="i-tr" viewBox="0 0 14 16"><path fill-rule="evenodd" d="M4.4 2.2 L5 0.7 Q5.2 0.2 5.8 0.2 H8.2 Q8.8 0.2 9 0.7 L9.6 2.2 H13 Q13.5 2.2 13.5 2.7 V3.4 Q13.5 3.9 13 3.9 H12.6 V13.4 Q12.6 15.8 10.6 15.8 H3.4 Q1.4 15.8 1.4 13.4 V3.9 H1 Q0.5 3.9 0.5 3.4 V2.7 Q0.5 2.2 1 2.2 Z M6 2.2 H8 L7.7 1.6 H6.3 Z M3.2 3.9 V13.4 Q3.2 14 3.7 14 H10.3 Q10.8 14 10.8 13.4 V3.9 Z M4.3 5.6 H5.7 V12.4 H4.3 Z M6.3 5.6 H7.7 V12.4 H6.3 Z M8.3 5.6 H9.7 V12.4 H8.3 Z" fill="currentColor"/></svg></span></td></tr>
<tr><td class="dt">2024-04-11 11:13:35</td><td class="ops"><span class="xb xb-p"><svg class="i-list" viewBox="0 0 16 14"><path d="M0 0.8h2.4v2.2h-2.4z M3.6 0.8h12.4v2.2h-12.4z M0 4.2h2.4v2.2h-2.4z M3.6 4.2h12.4v2.2h-12.4z M0 7.6h2.4v2.2h-2.4z M3.6 7.6h12.4v2.2h-12.4z M0 11h2.4v2.2h-2.4z M3.6 11h12.4v2.2h-12.4z" fill="currentColor"/></svg>报名列表</span><span class="xb xb-s"><svg class="i-pen" viewBox="0 0 16 16"><path d="M1 15 L1.9 10.6 L9.9 2.6 L13.4 6.1 L5.4 14.1 Z M10.9 1.6 L11.8 0.7 Q12.5 0.1 13.2 0.7 L15.3 2.8 Q15.9 3.5 15.3 4.2 L14.4 5.1 Z" fill="currentColor"/></svg></span><span class="xb xb-d"><svg class="i-tr" viewBox="0 0 14 16"><path fill-rule="evenodd" d="M4.4 2.2 L5 0.7 Q5.2 0.2 5.8 0.2 H8.2 Q8.8 0.2 9 0.7 L9.6 2.2 H13 Q13.5 2.2 13.5 2.7 V3.4 Q13.5 3.9 13 3.9 H12.6 V13.4 Q12.6 15.8 10.6 15.8 H3.4 Q1.4 15.8 1.4 13.4 V3.9 H1 Q0.5 3.9 0.5 3.4 V2.7 Q0.5 2.2 1 2.2 Z M6 2.2 H8 L7.7 1.6 H6.3 Z M3.2 3.9 V13.4 Q3.2 14 3.7 14 H10.3 Q10.8 14 10.8 13.4 V3.9 Z M4.3 5.6 H5.7 V12.4 H4.3 Z M6.3 5.6 H7.7 V12.4 H6.3 Z M8.3 5.6 H9.7 V12.4 H8.3 Z" fill="currentColor"/></svg></span></td></tr>
<tr><td class="dt">2024-04-11 11:13:09</td><td class="ops"><span class="xb xb-p"><svg class="i-list" viewBox="0 0 16 14"><path d="M0 0.8h2.4v2.2h-2.4z M3.6 0.8h12.4v2.2h-12.4z M0 4.2h2.4v2.2h-2.4z M3.6 4.2h12.4v2.2h-12.4z M0 7.6h2.4v2.2h-2.4z M3.6 7.6h12.4v2.2h-12.4z M0 11h2.4v2.2h-2.4z M3.6 11h12.4v2.2h-12.4z" fill="currentColor"/></svg>报名列表</span><span class="xb xb-s"><svg class="i-pen" viewBox="0 0 16 16"><path d="M1 15 L1.9 10.6 L9.9 2.6 L13.4 6.1 L5.4 14.1 Z M10.9 1.6 L11.8 0.7 Q12.5 0.1 13.2 0.7 L15.3 2.8 Q15.9 3.5 15.3 4.2 L14.4 5.1 Z" fill="currentColor"/></svg></span><span class="xb xb-d"><svg class="i-tr" viewBox="0 0 14 16"><path fill-rule="evenodd" d="M4.4 2.2 L5 0.7 Q5.2 0.2 5.8 0.2 H8.2 Q8.8 0.2 9 0.7 L9.6 2.2 H13 Q13.5 2.2 13.5 2.7 V3.4 Q13.5 3.9 13 3.9 H12.6 V13.4 Q12.6 15.8 10.6 15.8 H3.4 Q1.4 15.8 1.4 13.4 V3.9 H1 Q0.5 3.9 0.5 3.4 V2.7 Q0.5 2.2 1 2.2 Z M6 2.2 H8 L7.7 1.6 H6.3 Z M3.2 3.9 V13.4 Q3.2 14 3.7 14 H10.3 Q10.8 14 10.8 13.4 V3.9 Z M4.3 5.6 H5.7 V12.4 H4.3 Z M6.3 5.6 H7.7 V12.4 H6.3 Z M8.3 5.6 H9.7 V12.4 H8.3 Z" fill="currentColor"/></svg></span></td></tr>
<tr><td class="dt">2024-04-11 11:12:40</td><td class="ops"><span class="xb xb-p"><svg class="i-list" viewBox="0 0 16 14"><path d="M0 0.8h2.4v2.2h-2.4z M3.6 0.8h12.4v2.2h-12.4z M0 4.2h2.4v2.2h-2.4z M3.6 4.2h12.4v2.2h-12.4z M0 7.6h2.4v2.2h-2.4z M3.6 7.6h12.4v2.2h-12.4z M0 11h2.4v2.2h-2.4z M3.6 11h12.4v2.2h-12.4z" fill="currentColor"/></svg>报名列表</span><span class="xb xb-s"><svg class="i-pen" viewBox="0 0 16 16"><path d="M1 15 L1.9 10.6 L9.9 2.6 L13.4 6.1 L5.4 14.1 Z M10.9 1.6 L11.8 0.7 Q12.5 0.1 13.2 0.7 L15.3 2.8 Q15.9 3.5 15.3 4.2 L14.4 5.1 Z" fill="currentColor"/></svg></span><span class="xb xb-d"><svg class="i-tr" viewBox="0 0 14 16"><path fill-rule="evenodd" d="M4.4 2.2 L5 0.7 Q5.2 0.2 5.8 0.2 H8.2 Q8.8 0.2 9 0.7 L9.6 2.2 H13 Q13.5 2.2 13.5 2.7 V3.4 Q13.5 3.9 13 3.9 H12.6 V13.4 Q12.6 15.8 10.6 15.8 H3.4 Q1.4 15.8 1.4 13.4 V3.9 H1 Q0.5 3.9 0.5 3.4 V2.7 Q0.5 2.2 1 2.2 Z M6 2.2 H8 L7.7 1.6 H6.3 Z M3.2 3.9 V13.4 Q3.2 14 3.7 14 H10.3 Q10.8 14 10.8 13.4 V3.9 Z M4.3 5.6 H5.7 V12.4 H4.3 Z M6.3 5.6 H7.7 V12.4 H6.3 Z M8.3 5.6 H9.7 V12.4 H8.3 Z" fill="currentColor"/></svg></span></td></tr>
<tr><td class="dt">2024-04-11 11:11:21</td><td class="ops"><span class="xb xb-p"><svg class="i-list" viewBox="0 0 16 14"><path d="M0 0.8h2.4v2.2h-2.4z M3.6 0.8h12.4v2.2h-12.4z M0 4.2h2.4v2.2h-2.4z M3.6 4.2h12.4v2.2h-12.4z M0 7.6h2.4v2.2h-2.4z M3.6 7.6h12.4v2.2h-12.4z M0 11h2.4v2.2h-2.4z M3.6 11h12.4v2.2h-12.4z" fill="currentColor"/></svg>报名列表</span><span class="xb xb-s"><svg class="i-pen" viewBox="0 0 16 16"><path d="M1 15 L1.9 10.6 L9.9 2.6 L13.4 6.1 L5.4 14.1 Z M10.9 1.6 L11.8 0.7 Q12.5 0.1 13.2 0.7 L15.3 2.8 Q15.9 3.5 15.3 4.2 L14.4 5.1 Z" fill="currentColor"/></svg></span><span class="xb xb-d"><svg class="i-tr" viewBox="0 0 14 16"><path fill-rule="evenodd" d="M4.4 2.2 L5 0.7 Q5.2 0.2 5.8 0.2 H8.2 Q8.8 0.2 9 0.7 L9.6 2.2 H13 Q13.5 2.2 13.5 2.7 V3.4 Q13.5 3.9 13 3.9 H12.6 V13.4 Q12.6 15.8 10.6 15.8 H3.4 Q1.4 15.8 1.4 13.4 V3.9 H1 Q0.5 3.9 0.5 3.4 V2.7 Q0.5 2.2 1 2.2 Z M6 2.2 H8 L7.7 1.6 H6.3 Z M3.2 3.9 V13.4 Q3.2 14 3.7 14 H10.3 Q10.8 14 10.8 13.4 V3.9 Z M4.3 5.6 H5.7 V12.4 H4.3 Z M6.3 5.6 H7.7 V12.4 H6.3 Z M8.3 5.6 H9.7 V12.4 H8.3 Z" fill="currentColor"/></svg></span></td></tr>
</tbody></table></div>

<div class="pinfo">显示第 1 到第 10 条记录，总共 23 条记录 每页显示<span style="display:inline-block;width:65.7px"></span>条记录</div>
<div class="psz">10<svg viewBox="0 0 8 5"><path d="M0 4.8 H8 L4 0.2 Z" fill="currentColor"/></svg></div>
<div class="pg first" style="left:1089.4px;width:71.6px">上一页</div>
<div class="pg on" style="left:1161px;width:36px">1</div>
<div class="pg" style="left:1197px;width:34.4px">2</div>
<div class="pg" style="left:1231.4px;width:35.1px">3</div>
<div class="pg last" style="left:1266.5px;width:72.3px">下一页</div>
<div class="pinp"></div>
<div class="pgo">跳转</div>

</div>
<svg class="wms" viewBox="0 0 41 37"><path d="M20.5 1 L37 6 V17 Q37 29 20.5 36 Q4 29 4 17 V6 Z" fill="none" stroke="rgba(255,255,255,.2)" stroke-width="3"/></svg>
<div class="wm">FASTADMIN</div>
</body>
</html>
